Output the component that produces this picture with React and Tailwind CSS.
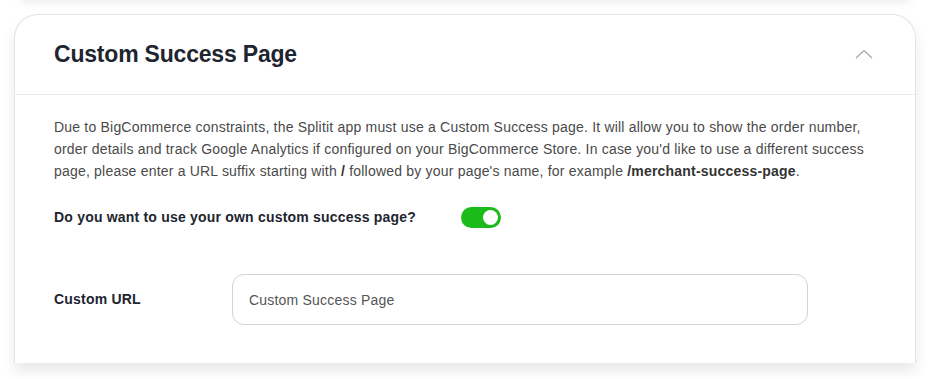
import { useState } from "react";

const ChevronUp = () => (
  <svg width="18" height="10" viewBox="0 0 18 10" fill="none">
    <path d="M1 9L9 1.5L17 9" stroke="#a3a8b0" strokeWidth="1.2" />
  </svg>
);

const App = () => {
  const [enabled, setEnabled] = useState(true);
  const [url, setUrl] = useState("");

  return (
    <div className="min-h-screen bg-white font-['Liberation_Sans',Arial,sans-serif] pl-[14px] pr-[21px] overflow-hidden">
      {/* previous card, only its shadow peeks in */}
      <div className="h-[20px] -mt-[20px] mx-[6px] bg-white shadow-[0_2px_10px_rgba(0,0,0,0.08)]" />

      <section className="mt-[14px] bg-white rounded-t-[24px] border border-b-0 border-[#e4e4e4] shadow-[0_8px_14px_rgba(0,0,0,0.09)]">
        <div className="h-[80px] px-[39px] flex items-center justify-between border-b border-[#ebebeb]">
          <h2 className="text-[23px] font-bold text-[#1e2530] tracking-[-0.2px]">Custom Success Page</h2>
          <button className="mr-[3px] mb-[2px]">
            <ChevronUp />
          </button>
        </div>

        <div className="px-[39px] pt-[21px] pb-[38px] text-[14px] tracking-[0.2px]">
          <p className="leading-[22px] text-[#4a4a4a]">
            Due to BigCommerce constraints, the Splitit app must use a Custom Success page. It will allow you to show the order number, order details and track Google Analytics if configured on your BigCommerce Store. In case you'd like to use a different success page, please enter a URL suffix starting with <b className="text-[#333]">/</b> followed by your page's name, for example <b className="text-[#333]">/merchant-success-page</b>.
          </p>

          <div className="flex items-center mt-[25px]">
            <span className="w-[407px] font-bold text-[#1e2530]">Do you want to use your own custom success page?</span>
            <button
              onClick={() => setEnabled(!enabled)}
              className={
                enabled
                  ? "w-[40px] h-[21px] rounded-full bg-[#1cbb1c] flex items-center justify-end px-[3px]"
                  : "w-[40px] h-[21px] rounded-full bg-[#cfcfcf] flex items-center justify-start px-[3px]"
              }
            >
              <span className="w-[15px] h-[15px] rounded-full bg-white" />
            </button>
          </div>

          <div className="flex items-center mt-[46px]">
            <label className="w-[178px] font-bold text-[#1e2530]">Custom URL</label>
            <input
              type="text"
              value={url}
              onChange={(e) => setUrl(e.target.value)}
              placeholder="Custom Success Page"
              className="w-[576px] h-[51px] px-[16px] rounded-[12px] border border-[#d2d2d8] text-[#333] placeholder:text-[#555] focus:outline-none"
            />
          </div>
        </div>
      </section>
    </div>
  );
};

export default App;
